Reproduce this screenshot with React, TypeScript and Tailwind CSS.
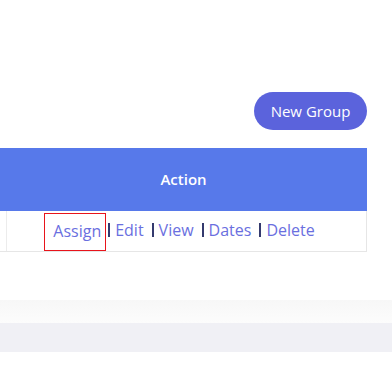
import React from 'react';

const links = ['Edit', 'View', 'Dates', 'Delete'];

const App: React.FC = () => {
  return (
    <div className="w-[392px] h-[368px] bg-white overflow-hidden" style={{ fontFamily: '"Open Sans", "Noto Sans", sans-serif' }}>
      <div className="h-[92px]" />
      <div className="flex justify-end pr-[25px]">
        <button className="h-[38px] w-[113px] rounded-full bg-[#5b63dc] text-white text-[15px] leading-none">
          New Group
        </button>
      </div>
      <div className="h-[18px]" />
      <div className="w-[367px]">
        <div className="h-[63px] bg-[#5779ea] flex items-center justify-center text-white text-[15px] font-semibold">
          Action
        </div>
        <div className="h-[41px] flex border-b border-r border-[#e6e6e6]">
          <div className="w-[7px] border-r border-[#ececec]" />
          <div className="flex-1 flex items-stretch justify-center pr-[14px] text-[16px] text-[#6a6fe0]">
            <span className="flex items-center pl-[8px] pr-[4px] pb-[3px] border border-[#e8141b] mt-[2px]">Assign</span>
            {links.map((l, i) => (
              <span key={l} className="flex items-center pb-[2px]">
                <span className={`inline-block w-[2px] h-[14px] bg-[#343a6e] ${i === 0 ? 'ml-[2px]' : 'ml-[8px]'} mr-[5px]`} />
                {l}
              </span>
            ))}
          </div>
        </div>
      </div>
      <div className="h-[48px]" />
      <div className="h-[23px] bg-gradient-to-b from-[#f7f7f7] to-[#fcfcfc]" />
      <div className="h-[29px] bg-[#f0f0f5]" />
    </div>
  );
};

export default App;
